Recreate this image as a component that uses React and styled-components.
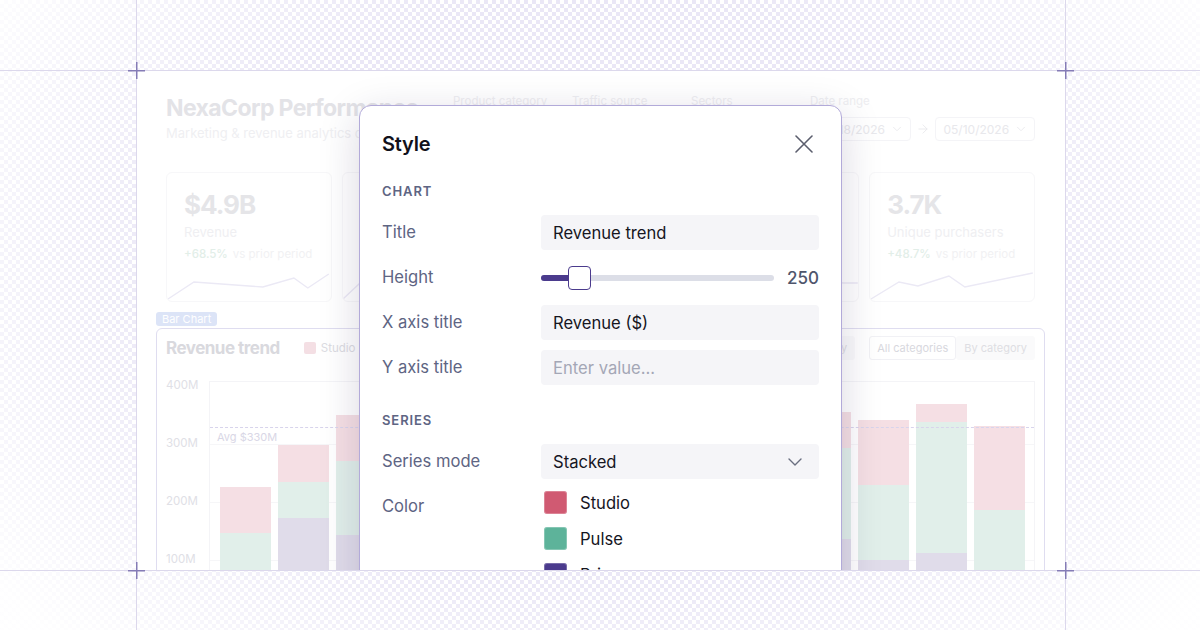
import React from "react";
import styled, { createGlobalStyle } from "styled-components";
import { ChevronDown, ArrowRight } from "lucide-react";

const GlobalStyle = createGlobalStyle`
  html, body {
    margin: 0;
    padding: 0;
    background: #fff;
  }
  body {
    font-family: Inter, "Noto Sans", "Liberation Sans", sans-serif;
  }
`;

const GUIDE = "#dcd8ec";

const Page = styled.div`
  position: relative;
  width: 1200px;
  height: 630px;
  overflow: hidden;
  display: grid;
  grid-template-columns: 136px 929px 1fr;
  grid-template-rows: 70px 500px 1fr;
  background-color: #fff;
  background-image: conic-gradient(
    #eae7f6 25%,
    transparent 0 50%,
    #eae7f6 0 75%,
    transparent 0
  );
  background-size: 8px 8px;

  &::before {
    content: "";
    position: absolute;
    inset: 0;
    background: radial-gradient(
      ellipse 62% 82% at 50% 45%,
      rgba(255, 255, 255, 0) 55%,
      rgba(255, 255, 255, 0.95) 100%
    );
    z-index: 0;
  }

  &::after {
    content: "";
    position: absolute;
    inset: 0;
    pointer-events: none;
    z-index: 3;
    background:
      linear-gradient(${GUIDE}, ${GUIDE}) 0 70px / 100% 1px no-repeat,
      linear-gradient(${GUIDE}, ${GUIDE}) 0 570px / 100% 1px no-repeat,
      linear-gradient(${GUIDE}, ${GUIDE}) 136px 0 / 1px 100% no-repeat,
      linear-gradient(${GUIDE}, ${GUIDE}) 1065px 0 / 1px 100% no-repeat;
  }
`;

const Cross = styled.div`
  position: absolute;
  left: ${(p) => p.x - 8}px;
  top: ${(p) => p.y - 8}px;
  width: 17px;
  height: 17px;
  z-index: 4;
  background:
    linear-gradient(#857cb6, #857cb6) center / 17px 1.5px no-repeat,
    linear-gradient(#857cb6, #857cb6) center / 1.5px 17px no-repeat;
`;

const Frame = styled.div`
  grid-column: 2;
  grid-row: 2;
  position: relative;
  z-index: 1;
  overflow: hidden;
  background: #fff;
`;

/* ---------- faded dashboard ---------- */

const Dashboard = styled.div`
  display: flex;
  flex-direction: column;
  padding: 23px 30px 0;
`;

const Header = styled.div`
  display: flex;
  justify-content: space-between;
  align-items: flex-start;
`;

const TitleBlock = styled.div`
  display: flex;
  flex-direction: column;
`;

const DashTitle = styled.h1`
  margin: 0;
  font-size: 23px;
  line-height: 30px;
  font-weight: 700;
  letter-spacing: -0.6px;
  color: #e3e3e7;
`;

const DashSub = styled.div`
  font-size: 13px;
  line-height: 20px;
  color: #efeff2;
`;

const Filters = styled.div`
  display: flex;
  gap: 10px;
`;

const Filter = styled.div`
  display: flex;
  flex-direction: column;
  gap: 8px;
  width: ${(p) => p.w}px;
`;

const FilterLabel = styled.div`
  font-size: 11.5px;
  line-height: 16px;
  color: #eeeef1;
`;

const FilterBox = styled.div`
  display: flex;
  align-items: center;
  justify-content: space-between;
  height: 24px;
  box-sizing: border-box;
  padding: 0 6px 0 8px;
  border: 1px solid #f4f4f7;
  border-radius: 4px;
  font-size: 12px;
  color: #e8e8ec;
  flex: 1;
`;

const DateRow = styled.div`
  display: flex;
  align-items: center;
  gap: 5px;
  color: #e8e8ec;
`;

const KpiRow = styled.div`
  display: flex;
  gap: 10px;
  margin-top: 29px;
`;

const Kpi = styled.div`
  flex: 1;
  min-width: 0;
  height: 130px;
  box-sizing: border-box;
  border: 1px solid #f7f7f9;
  border-radius: 6px;
  padding: 15px 0 0;
  display: flex;
  flex-direction: column;
  overflow: hidden;
`;

const KpiValue = styled.div`
  padding: 0 17px;
  font-size: 26px;
  line-height: 34px;
  font-weight: 700;
  letter-spacing: -1px;
  color: #e5e5e8;
`;

const KpiLabel = styled.div`
  padding: 0 17px;
  font-size: 13px;
  line-height: 20px;
  color: #efeff2;
  white-space: nowrap;
`;

const KpiDelta = styled.div`
  padding: 0 17px;
  margin-top: 3px;
  font-size: 11.5px;
  line-height: 18px;
  color: #f1f1f3;
  white-space: nowrap;

  b {
    font-weight: 500;
    color: #e2eee8;
    margin-right: 5px;
  }
`;

const Spark = styled.svg`
  margin-top: auto;
  display: block;
`;

const ChartWrap = styled.div`
  position: relative;
  margin: 26px -10px 0;
`;

const Badge = styled.div`
  position: absolute;
  left: 0;
  top: -16px;
  padding: 0 6px;
  height: 14px;
  line-height: 14px;
  font-size: 11px;
  color: #fff;
  background: #dce4f7;
  border-radius: 3px;
`;

const ChartCard = styled.div`
  border: 1px solid #dfddf0;
  border-radius: 6px;
  padding: 6px 9px 0 9px;
  height: 300px;
  box-sizing: border-box;
`;

const ChartHead = styled.div`
  display: flex;
  align-items: center;
  height: 26px;
`;

const ChartTitle = styled.div`
  font-size: 17px;
  font-weight: 700;
  letter-spacing: -0.5px;
  color: #d9d9de;
  margin-right: 24px;
`;

const Legend = styled.div`
  display: flex;
  align-items: center;
  gap: 5px;
  margin-right: 14px;
  font-size: 11.5px;
  color: #dcdce2;
`;

const Swatch = styled.span`
  width: 12px;
  height: 12px;
  border-radius: 2px;
  background: ${(p) => p.c};
`;

const Tabs = styled.div`
  display: flex;
  margin-left: ${(p) => (p.push ? "auto" : "14px")};
`;

const Tab = styled.div`
  height: 24px;
  box-sizing: border-box;
  padding: 0 7px;
  display: flex;
  align-items: center;
  font-size: 11px;
  color: ${(p) => (p.active ? "#d8d8de" : "#dedee3")};
  border: 1px solid ${(p) => (p.active ? "#f1f1f5" : "transparent")};
  background: ${(p) => (p.active ? "#fff" : "#fafafb")};
  border-radius: 3px;
`;

const PlotRow = styled.div`
  display: flex;
  margin-top: 20px;
`;

const YAxis = styled.div`
  width: 43px;
  display: flex;
  flex-direction: column;
  gap: 44px;
  margin-top: -3px;
  font-size: 11.5px;
  line-height: 14px;
  color: #e0e0e6;
`;

const Plot = styled.div`
  position: relative;
  flex: 1;
  height: 238px;
  border: 1px solid #f4f4f7;
  border-bottom: none;
  background-image: repeating-linear-gradient(
    to bottom,
    transparent 0 57px,
    #f6f6f8 57px 58px
  );
  background-position: 0 5px;
`;

const Bars = styled.div`
  display: flex;
  align-items: flex-end;
  justify-content: space-between;
  height: 100%;
  padding: 0 9px 0 10px;
`;

const Bar = styled.div`
  width: 51px;
  display: flex;
  flex-direction: column;
`;

const Seg = styled.div`
  background: ${(p) => p.c};
`;

const AvgLine = styled.div`
  position: absolute;
  left: 0;
  right: 0;
  top: 45px;
  border-top: 1px dashed #d8d4ec;
  z-index: 1;
`;

const AvgLabel = styled.div`
  position: absolute;
  left: 7px;
  top: 48px;
  font-size: 11px;
  line-height: 14px;
  color: #d9d7e6;
  z-index: 1;
`;

/* ---------- Style dialog ---------- */

const Dialog = styled.div`
  position: absolute;
  left: 223px;
  top: 35px;
  width: 483px;
  height: 540px;
  box-sizing: border-box;
  z-index: 2;
  background: #fff;
  border: 1.5px solid #b2aad9;
  border-radius: 12px;
  box-shadow: 0 10px 40px rgba(30, 20, 70, 0.17);
  padding: 24px 22px;
  display: flex;
  flex-direction: column;
`;

const DialogHead = styled.div`
  display: flex;
  align-items: center;
  justify-content: space-between;
  height: 28px;
`;

const DialogTitle = styled.div`
  font-size: 20px;
  font-weight: 600;
  color: #11111b;
  letter-spacing: -0.2px;
`;

const Close = styled.button`
  width: 32px;
  height: 32px;
  margin-right: -1px;
  padding: 0;
  border: none;
  background: transparent;
  display: flex;
  align-items: center;
  justify-content: center;
`;

const SectionLabel = styled.div`
  margin-top: ${(p) => p.mt}px;
  margin-bottom: 16px;
  font-size: 13px;
  line-height: 16px;
  font-weight: 600;
  letter-spacing: 0.9px;
  color: #5e6583;
`;

const Fields = styled.div`
  display: grid;
  grid-template-columns: 159px 1fr;
  row-gap: 10px;
  grid-auto-rows: minmax(35px, auto);
`;

const Label = styled.div`
  font-size: 16.6px;
  line-height: 35px;
  color: #5e6583;
`;

const Input = styled.div`
  height: 35px;
  box-sizing: border-box;
  padding: 0 12px;
  display: flex;
  align-items: center;
  justify-content: space-between;
  background: #f5f5f8;
  border-radius: 4px;
  font-size: 16.6px;
  color: ${(p) => (p.placeholder ? "#a4a7b6" : "#16161f")};
`;

const SliderRow = styled.div`
  display: flex;
  align-items: center;
  gap: 13px;
`;

const Track = styled.div`
  position: relative;
  flex: 1;
  height: 6px;
  border-radius: 3px;
  background: #dcdee7;
`;

const Fill = styled.div`
  height: 100%;
  border-radius: 3px;
  background: #4b3b8d;
`;

const Thumb = styled.div`
  position: absolute;
  top: -9px;
  width: 23px;
  height: 24px;
  box-sizing: border-box;
  background: #fff;
  border: 1.5px solid #4b3b8d;
  border-radius: 4px;
`;

const SliderValue = styled.div`
  font-size: 17px;
  font-weight: 500;
  color: #4f566c;
`;

const ColorList = styled.div`
  display: flex;
  flex-direction: column;
  gap: 13px;
  padding: 2px 0 0 3px;
`;

const ColorItem = styled.div`
  display: flex;
  align-items: center;
  gap: 13px;
  height: 23px;
  font-size: 16.6px;
  color: #16161f;
`;

const ColorChip = styled.span`
  width: 23px;
  height: 23px;
  border-radius: 3px;
  background: ${(p) => p.c};
  box-shadow: inset 0 0 0 1px rgba(255, 255, 255, 0.25);
`;

const kpis = [
  { value: "$4.9B", label: "Revenue", delta: "+68.5%", pts: "1,28 27,11 96,16 127,7 141,17 162,3" },
  { value: "128K", label: "Orders", delta: "+22.4%", pts: "0,28 16,13 60,18 95,8 118,15 164,4" },
  { value: "$38.2", label: "Avg order value", delta: "+12.1%", pts: "0,26 30,14 70,19 100,9 130,16 164,6" },
  { value: "4.6%", label: "Conversion rate", delta: "+3.2%", pts: "0,24 40,15 80,18 110,9 150,12 164,12" },
  { value: "3.7K", label: "Unique purchasers", delta: "+48.7%", pts: "1,28 29,11 48,15 79,5 95,16 163,2" },
];

// [purple, green, pink] in millions
const bars = [
  [75, 75, 79],
  [176, 62, 64],
  [147, 127, 79],
  [160, 110, 70],
  [130, 140, 60],
  [180, 90, 55],
  [150, 120, 75],
  [170, 100, 65],
  [140, 150, 50],
  [165, 95, 80],
  [140, 157, 62],
  [103, 130, 112],
  [116, 225, 31],
  [70, 120, 144],
];

const PX_PER_M = 0.58;

const CloseIcon = () => (
  <svg width="18" height="18" viewBox="0 0 18 18">
    <path d="M1 1 L17 17 M17 1 L1 17" stroke="#5b5e6d" strokeWidth="1.6" strokeLinecap="round" />
  </svg>
);

export default function App() {
  return (
    <>
      <GlobalStyle />
      <Page>
        <Frame>
          <Dashboard>
            <Header>
              <TitleBlock>
                <DashTitle>NexaCorp Performance</DashTitle>
                <DashSub>Marketing &amp; revenue analytics dashboard</DashSub>
              </TitleBlock>
              <Filters>
                {["Product category", "Traffic source", "Sectors"].map((f) => (
                  <Filter key={f} w={109}>
                    <FilterLabel>{f}</FilterLabel>
                    <FilterBox>
                      All
                      <ChevronDown size={14} strokeWidth={1.5} />
                    </FilterBox>
                  </Filter>
                ))}
                <Filter w={225}>
                  <FilterLabel>Date range</FilterLabel>
                  <DateRow>
                    <FilterBox>
                      04/18/2026
                      <ChevronDown size={14} strokeWidth={1.5} />
                    </FilterBox>
                    <ArrowRight size={14} strokeWidth={1.5} />
                    <FilterBox>
                      05/10/2026
                      <ChevronDown size={14} strokeWidth={1.5} />
                    </FilterBox>
                  </DateRow>
                </Filter>
              </Filters>
            </Header>

            <KpiRow>
              {kpis.map((k) => (
                <Kpi key={k.label}>
                  <KpiValue>{k.value}</KpiValue>
                  <KpiLabel>{k.label}</KpiLabel>
                  <KpiDelta>
                    <b>{k.delta}</b>vs prior period
                  </KpiDelta>
                  <Spark width="100%" height="30" viewBox="0 0 164 30" preserveAspectRatio="none">
                    <polyline points={k.pts} fill="none" stroke="#ebe9f5" strokeWidth="1.4" />
                  </Spark>
                </Kpi>
              ))}
            </KpiRow>

            <ChartWrap>
              <Badge>Bar Chart</Badge>
              <ChartCard>
                <ChartHead>
                  <ChartTitle>Revenue trend</ChartTitle>
                  <Legend>
                    <Swatch c="#f4dfe4" />
                    Studio
                  </Legend>
                  <Legend>
                    <Swatch c="#e1efea" />
                    Pulse
                  </Legend>
                  <Legend>
                    <Swatch c="#e0dcea" />
                    Prism
                  </Legend>
                  <Tabs push>
                    <Tab>Weekly</Tab>
                    <Tab>Monthly</Tab>
                  </Tabs>
                  <Tabs>
                    <Tab active>All categories</Tab>
                    <Tab>By category</Tab>
                  </Tabs>
                </ChartHead>
                <PlotRow>
                  <YAxis>
                    <div>400M</div>
                    <div>300M</div>
                    <div>200M</div>
                    <div>100M</div>
                  </YAxis>
                  <Plot>
                    <AvgLine />
                    <AvgLabel>Avg $330M</AvgLabel>
                    <Bars>
                      {bars.map(([p, g, r], i) => (
                        <Bar key={i}>
                          <Seg c="#f5dfe4" style={{ height: r * PX_PER_M }} />
                          <Seg c="#e1efea" style={{ height: g * PX_PER_M }} />
                          <Seg c="#e0dcea" style={{ height: p * PX_PER_M }} />
                        </Bar>
                      ))}
                    </Bars>
                  </Plot>
                </PlotRow>
              </ChartCard>
            </ChartWrap>
          </Dashboard>

          <Dialog>
            <DialogHead>
              <DialogTitle>Style</DialogTitle>
              <Close aria-label="Close">
                <CloseIcon />
              </Close>
            </DialogHead>

            <SectionLabel mt={25}>CHART</SectionLabel>
            <Fields>
              <Label>Title</Label>
              <Input>Revenue trend</Input>

              <Label>Height</Label>
              <SliderRow>
                <Track>
                  <Fill style={{ width: 36 }} />
                  <Thumb style={{ left: 27 }} />
                </Track>
                <SliderValue>250</SliderValue>
              </SliderRow>

              <Label>X axis title</Label>
              <Input>Revenue ($)</Input>

              <Label>Y axis title</Label>
              <Input placeholder>Enter value...</Input>
            </Fields>

            <SectionLabel mt={27}>SERIES</SectionLabel>
            <Fields>
              <Label>Series mode</Label>
              <Input>
                Stacked
                <ChevronDown size={24} strokeWidth={1.4} color="#6a6f80" />
              </Input>

              <Label>Color</Label>
              <ColorList>
                <ColorItem>
                  <ColorChip c="#d05a72" />
                  Studio
                </ColorItem>
                <ColorItem>
                  <ColorChip c="#5db39a" />
                  Pulse
                </ColorItem>
                <ColorItem>
                  <ColorChip c="#4b3b8d" />
                  Prism
                </ColorItem>
              </ColorList>
            </Fields>
          </Dialog>
        </Frame>

        <Cross x={136} y={70} />
        <Cross x={1065} y={70} />
        <Cross x={136} y={570} />
        <Cross x={1065} y={570} />
      </Page>
    </>
  );
}
